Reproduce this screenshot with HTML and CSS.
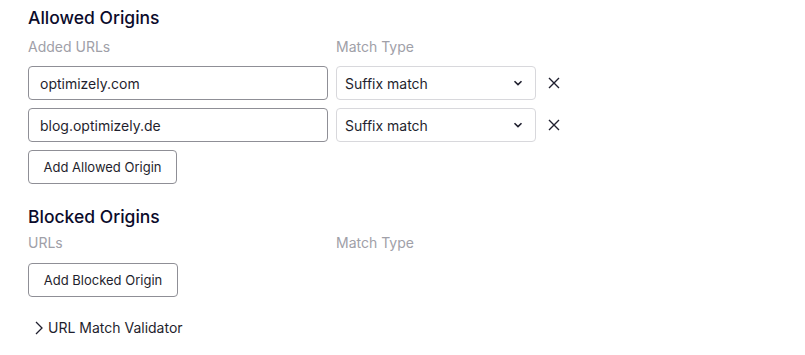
FILE: index.html
```html
<!DOCTYPE html>
<html>
<head>
<meta charset="utf-8">
<link rel="stylesheet" href="styles.css">
</head>
<body>
<div class="page">
  <section class="section">
    <h2 class="title">Allowed Origins</h2>
    <div class="labels">
      <span class="label url-col">Added URLs</span>
      <span class="label">Match Type</span>
    </div>
    <div class="row">
      <div class="input">optimizely.com</div>
      <div class="select"><span>Suffix match</span>
        <svg class="chev" width="10" height="6" viewBox="0 0 10 6"><path d="M1.5 1.2 L5 4.6 L8.5 1.2" fill="none" stroke="#1f1f2e" stroke-width="1.6"/></svg>
      </div>
      <svg class="close" width="12" height="12" viewBox="0 0 12 12"><path d="M1 1 L11 11 M11 1 L1 11" stroke="#1f1f2e" stroke-width="1.4"/></svg>
    </div>
    <div class="row">
      <div class="input">blog.optimizely.de</div>
      <div class="select"><span>Suffix match</span>
        <svg class="chev" width="10" height="6" viewBox="0 0 10 6"><path d="M1.5 1.2 L5 4.6 L8.5 1.2" fill="none" stroke="#1f1f2e" stroke-width="1.6"/></svg>
      </div>
      <svg class="close" width="12" height="12" viewBox="0 0 12 12"><path d="M1 1 L11 11 M11 1 L1 11" stroke="#1f1f2e" stroke-width="1.4"/></svg>
    </div>
    <button class="btn">Add Allowed Origin</button>
  </section>
  <section class="section blocked">
    <h2 class="title">Blocked Origins</h2>
    <div class="labels">
      <span class="label url-col">URLs</span>
      <span class="label">Match Type</span>
    </div>
    <button class="btn">Add Blocked Origin</button>
  </section>
  <div class="validator">
    <svg class="arrow" width="8" height="14" viewBox="0 0 8 14"><path d="M1 1 L7 7 L1 13" fill="none" stroke="#1f1f2e" stroke-width="1.3"/></svg>
    <span>URL Match Validator</span>
  </div>
</div>
</body>
</html>
```
FILE: styles.css
```css
* { box-sizing: border-box; }
body {
  margin: 0;
  background: #fff;
  font-family: Inter, "Noto Sans", sans-serif;
  color: #1f1f2e;
}
.page {
  padding: 7px 28px 0 28px;
}
.title {
  margin: 0;
  font-size: 17.5px;
  font-weight: 500;
  line-height: 22px;
  color: #0b0b2b;
}
.labels {
  display: flex;
  margin-top: 7px;
  height: 20px;
  align-items: center;
}
.label {
  font-size: 14px;
  color: #a0a0a8;
}
.url-col {
  width: 308px;
  flex: none;
}
.row {
  display: flex;
  align-items: center;
  margin-top: 8px;
}
.labels + .row { margin-top: 10px; }
.input {
  width: 300px;
  flex: none;
  margin-right: 8px;
  height: 34px;
  border: 1px solid #8f8f96;
  border-radius: 4px;
  padding: 0 11px;
  font-size: 14px;
  display: flex;
  align-items: center;
  color: #1f1f2e;
}
.select {
  width: 200px;
  height: 34px;
  border: 1px solid #d8d8dc;
  border-radius: 4px;
  padding: 0 12px 0 8px;
  font-size: 14px;
  display: flex;
  align-items: center;
  justify-content: space-between;
}
.close {
  margin-left: 12px;
}
.btn {
  display: block;
  margin-top: 8px;
  height: 34px;
  width: 149px;
  border: 1px solid #8f8f96;
  border-radius: 4px;
  background: #fff;
  font-family: Inter, "Noto Sans", sans-serif;
  font-size: 13px;
  color: #1f1f2e;
  padding: 0;
}
.blocked {
  margin-top: 22px;
}
.blocked .labels {
  margin-top: 4px;
}
.blocked .labels + .btn {
  margin-top: 11px;
  width: 150px;
}
.validator {
  display: flex;
  align-items: center;
  margin-top: 22px;
  padding-left: 7px;
  font-size: 14px;
  color: #1f1f2e;
}
.arrow {
  margin-right: 5px;
}
```
